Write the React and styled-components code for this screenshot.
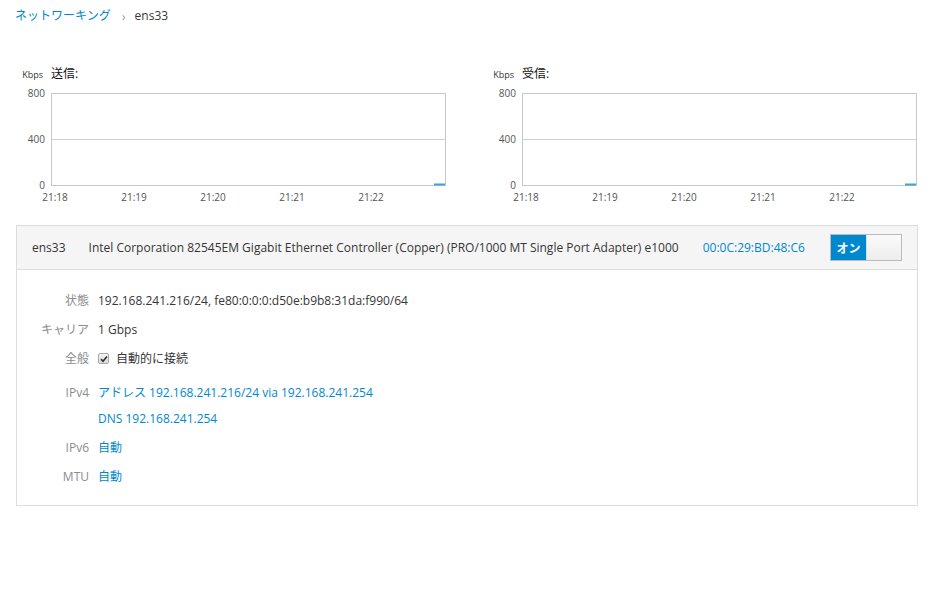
import React from "react";
import styled, { createGlobalStyle } from "styled-components";

const Global = createGlobalStyle`
  html, body { margin: 0; padding: 0; background: #fff; }
  body {
    font-family: "Open Sans", "Noto Sans CJK JP", sans-serif;
    font-size: 12px;
    color: #363636;
  }
`;

const Page = styled.div`
  width: 902px;
  padding: 7px 0 0 16px;
`;

const Breadcrumb = styled.nav`
  display: flex;
  align-items: center;
  height: 18px;
  line-height: 18px;
`;

const Crumb = styled.a`
  color: #0088ce;
  text-decoration: none;
  margin-left: -1px;
`;

const Sep = styled.span`
  color: #9c9c9c;
  font-size: 13px;
  margin: 0 9px 0 11px;
`;

const Current = styled.span`
  color: #363636;
`;

const Charts = styled.div`
  display: grid;
  grid-template-columns: 429px 429px;
  column-gap: 42px;
  margin-top: 40px;
`;

const ChartCol = styled.div`
  display: flex;
  flex-direction: column;
`;

const ChartTitle = styled.div`
  display: grid;
  grid-template-columns: 35px 1fr;
  align-items: baseline;
  height: 18px;
  line-height: 18px;
`;

const Unit = styled.span`
  font-size: 9px;
  color: #333;
  text-align: right;
  padding-right: 8px;
`;

const Title = styled.span`
  font-size: 12px;
  color: #111;
`;

const ChartSvg = styled.svg`
  display: block;
  margin-top: 3px;
  overflow: visible;
  font-family: "Open Sans", sans-serif;
`;

const Card = styled.section`
  margin-top: 19px;
  border: 1px solid #ddd;
  background: #fff;
`;

const CardHeader = styled.header`
  display: flex;
  align-items: center;
  gap: 23px;
  height: 43px;
  padding: 0 15px 0 15px;
  background: #f5f5f5;
  border-bottom: 1px solid #ddd;
  color: #363636;
`;

const Mac = styled.span`
  color: #0088ce;
  margin-left: 1px;
`;

const Toggle = styled.div`
  margin-left: auto;
  display: flex;
  width: 70px;
  height: 25px;
  border: 1px solid #bbb;
  box-sizing: content-box;
`;

const ToggleOn = styled.span`
  width: 35px;
  background: #0088ce;
  color: #fff;
  font-weight: 700;
  display: flex;
  align-items: center;
  justify-content: center;
  font-size: 12px;
`;

const ToggleOff = styled.span`
  flex: 1;
  background: linear-gradient(#fafafa, #ededed);
  border-left: 1px solid #ddd;
`;

const CardBody = styled.div`
  padding: 16px 0 14px 0;
`;

const Row = styled.div`
  display: grid;
  grid-template-columns: 72px 1fr;
  column-gap: 9px;
  align-items: start;
  padding-top: ${(p) => p.$pt || 0}px;
  padding-bottom: ${(p) => p.$pb || 0}px;
`;

const Label = styled.span`
  text-align: right;
  color: #8b8d8f;
  line-height: ${(p) => p.$lh || 29}px;
`;

const Value = styled.div`
  display: flex;
  flex-direction: column;
  color: #363636;
`;

const Line = styled.span`
  display: flex;
  align-items: center;
  line-height: ${(p) => p.$lh || 29}px;
  color: ${(p) => (p.$link ? "#0088ce" : "#363636")};
`;

const Check = styled.span`
  width: 11px;
  height: 11px;
  margin: 0 7px 0 0;
  border: 1px solid #a8a8a8;
  border-radius: 2px;
  background: linear-gradient(#f4f4f4, #dcdcdc);
  display: inline-flex;
  align-items: center;
  justify-content: center;
  box-sizing: border-box;
`;

function Chart({ title }) {
  const xs = [39, 118, 197, 276, 355];
  const labels = ["21:18", "21:19", "21:20", "21:21", "21:22"];
  return (
    <ChartCol>
      <ChartTitle>
        <Unit>Kbps</Unit>
        <Title>{title}</Title>
      </ChartTitle>
      <ChartSvg width="430" height="120" viewBox="0 0 430 120">
        <rect x="35.5" y="7.5" width="394" height="92" fill="#fff" stroke="#c8c8c8" strokeWidth="1" />
        <line x1="35.5" y1="53.5" x2="429.5" y2="53.5" stroke="#d0d0d0" strokeWidth="1" />
        <g fill="#545454" fontSize="10" textAnchor="end">
          <text x="29" y="11">800</text>
          <text x="29" y="57">400</text>
          <text x="29" y="103">0</text>
        </g>
        <g fill="#545454" fontSize="10" textAnchor="middle">
          {labels.map((l, i) => (
            <text key={l} x={xs[i]} y="115">{l}</text>
          ))}
        </g>
        <rect x="418" y="97.5" width="11" height="2" fill="#39a5dc" />
      </ChartSvg>
    </ChartCol>
  );
}

export default function App() {
  return (
    <>
      <Global />
      <Page>
        <Breadcrumb>
          <Crumb href="#">ネットワーキング</Crumb>
          <Sep>›</Sep>
          <Current>ens33</Current>
        </Breadcrumb>

        <Charts>
          <Chart title="送信:" />
          <Chart title="受信:" />
        </Charts>

        <Card>
          <CardHeader>
            <span>ens33</span>
            <span>Intel Corporation 82545EM Gigabit Ethernet Controller (Copper) (PRO/1000 MT Single Port Adapter) e1000</span>
            <Mac>00:0C:29:BD:48:C6</Mac>
            <Toggle>
              <ToggleOn>オン</ToggleOn>
              <ToggleOff />
            </Toggle>
          </CardHeader>
          <CardBody>
            <Row>
              <Label>状態</Label>
              <Value>
                <Line>192.168.241.216/24, fe80:0:0:0:d50e:b9b8:31da:f990/64</Line>
              </Value>
            </Row>
            <Row>
              <Label>キャリア</Label>
              <Value>
                <Line>1 Gbps</Line>
              </Value>
            </Row>
            <Row>
              <Label>全般</Label>
              <Value>
                <Line>
                  <Check>
                    <svg width="8" height="8" viewBox="0 0 8 8">
                      <path d="M1 4.2 L3 6.3 L7 1.5" fill="none" stroke="#333" strokeWidth="1.7" />
                    </svg>
                  </Check>
                  自動的に接続
                </Line>
              </Value>
            </Row>
            <Row $pt={7} $pb={1}>
              <Label $lh={26}>IPv4</Label>
              <Value>
                <Line $lh={26} $link>アドレス 192.168.241.216/24 via 192.168.241.254</Line>
                <Line $lh={26} $link>DNS 192.168.241.254</Line>
              </Value>
            </Row>
            <Row>
              <Label>IPv6</Label>
              <Value>
                <Line $link>自動</Line>
              </Value>
            </Row>
            <Row>
              <Label>MTU</Label>
              <Value>
                <Line $link>自動</Line>
              </Value>
            </Row>
          </CardBody>
        </Card>
      </Page>
    </>
  );
}
